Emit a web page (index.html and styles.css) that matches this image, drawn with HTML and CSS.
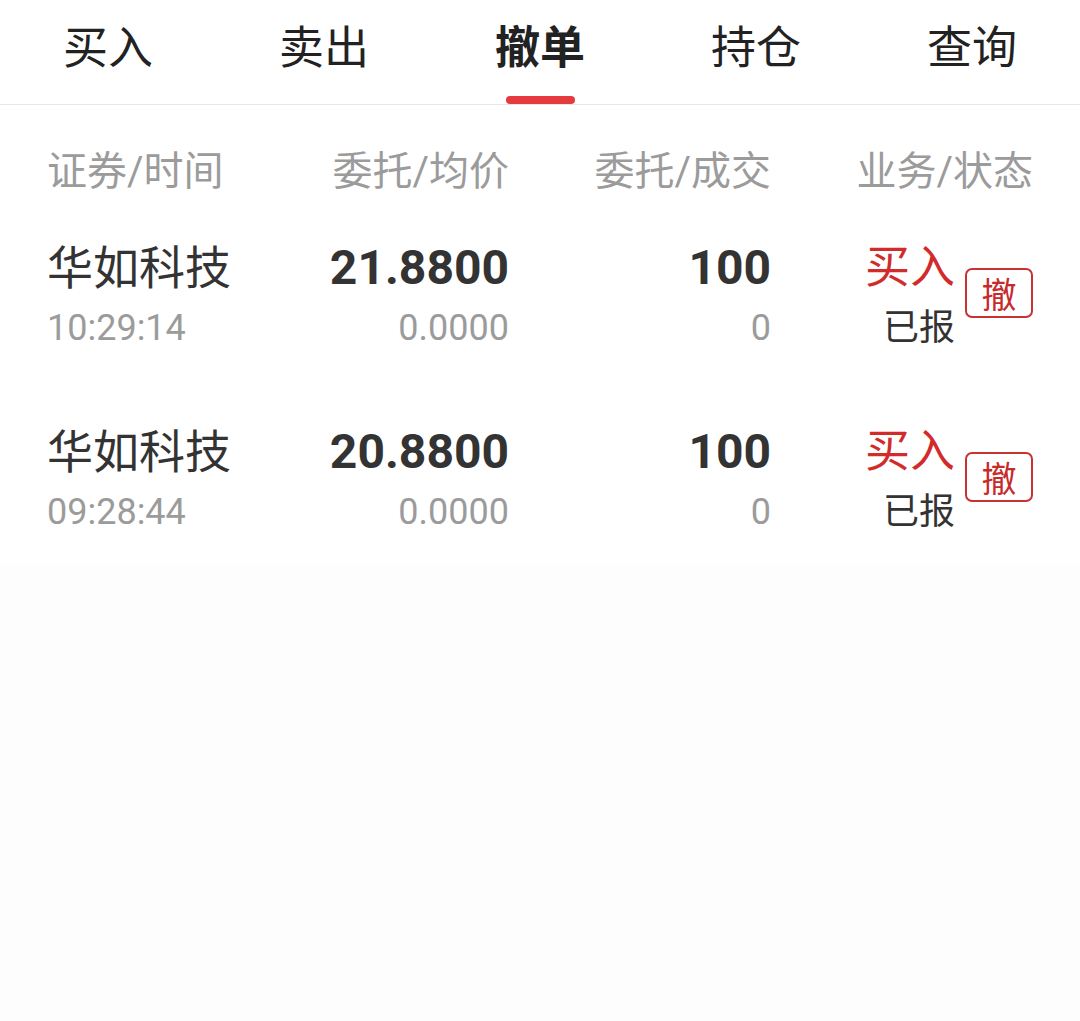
FILE: index.html
```html
<!DOCTYPE html>
<html lang="zh-CN">
<head>
    <meta charset="UTF-8">
    <meta name="viewport" content="width=device-width, initial-scale=1.0">
    <title>撤单</title>
    <link rel="stylesheet" href="styles.css">
</head>
<body>
    <div class="tabs">
        <div class="tab">买入</div>
        <div class="tab">卖出</div>
        <div class="tab active">撤单</div>
        <div class="tab">持仓</div>
        <div class="tab">查询</div>
    </div>

    <div class="list">
        <div class="list-head">
            <div>证券/时间</div>
            <div class="right">委托/均价</div>
            <div class="right">委托/成交</div>
            <div class="right">业务/状态</div>
        </div>

        <div class="order">
            <div class="cell">
                <div class="name">华如科技</div>
                <div class="sub">10:29:14</div>
            </div>
            <div class="cell right">
                <div class="num">21.8800</div>
                <div class="sub">0.0000</div>
            </div>
            <div class="cell right">
                <div class="num">100</div>
                <div class="sub">0</div>
            </div>
            <div class="cell status-cell">
                <div class="status">
                    <div class="side">买入</div>
                    <div class="state">已报</div>
                </div>
                <button class="cancel-btn">撤</button>
            </div>
        </div>

        <div class="order">
            <div class="cell">
                <div class="name">华如科技</div>
                <div class="sub">09:28:44</div>
            </div>
            <div class="cell right">
                <div class="num">20.8800</div>
                <div class="sub">0.0000</div>
            </div>
            <div class="cell right">
                <div class="num">100</div>
                <div class="sub">0</div>
            </div>
            <div class="cell status-cell">
                <div class="status">
                    <div class="side">买入</div>
                    <div class="state">已报</div>
                </div>
                <button class="cancel-btn">撤</button>
            </div>
        </div>
    </div>
</body>
</html>
```

FILE: styles.css
```css
body {
    margin: 0;
    font-family: Roboto, "Noto Sans CJK SC", sans-serif;
    background-color: #fdfdfd;
    color: #333;
}

.tabs {
    display: grid;
    grid-template-columns: repeat(5, 1fr);
    background: #fff;
    border-bottom: 1px solid #e8e8e8;
}

.tab {
    display: flex;
    flex-direction: column;
    align-items: center;
    padding-top: 19px;
    font-size: 45px;
    line-height: 60px;
    color: #222;
}

.tab::after {
    content: "";
    display: block;
    width: 69px;
    height: 8px;
    margin-top: 17px;
    border-radius: 4px;
    background: transparent;
}

.tab.active {
    font-weight: bold;
}

.tab.active::after {
    background: #e53b3f;
}

.list {
    background: #fff;
    padding: 0 47px 20px;
    display: flex;
    flex-direction: column;
    gap: 64px;
}

.list-head,
.order {
    display: grid;
    grid-template-columns: 200px 262px 262px 262px;
}

.list-head {
    padding-top: 42px;
    padding-bottom: 43px;
    margin-bottom: -64px;
    font-size: 40px;
    line-height: 50px;
    color: #9b9b9b;
}

.right {
    text-align: right;
}

.name {
    font-size: 46px;
    line-height: 56px;
    color: #333;
}

.num {
    font-size: 48px;
    line-height: 56px;
    font-weight: bold;
    color: #333;
}

.sub {
    font-size: 36px;
    line-height: 64px;
    color: #9b9b9b;
}

.status-cell {
    display: flex;
    justify-content: flex-end;
    align-items: flex-start;
}

.status {
    text-align: right;
}

.side {
    font-size: 45px;
    line-height: 56px;
    color: #d12b2b;
}

.state {
    font-size: 36px;
    line-height: 64px;
    color: #333;
}

.cancel-btn {
    width: 68px;
    height: 50px;
    margin-left: 10px;
    margin-top: 28px;
    padding: 0;
    box-sizing: border-box;
    border: 2px solid #c93232;
    border-radius: 7px;
    background: #fff;
    color: #c62a2a;
    font-family: "Noto Sans CJK SC", sans-serif;
    font-size: 35px;
    line-height: 44px;
}
```
